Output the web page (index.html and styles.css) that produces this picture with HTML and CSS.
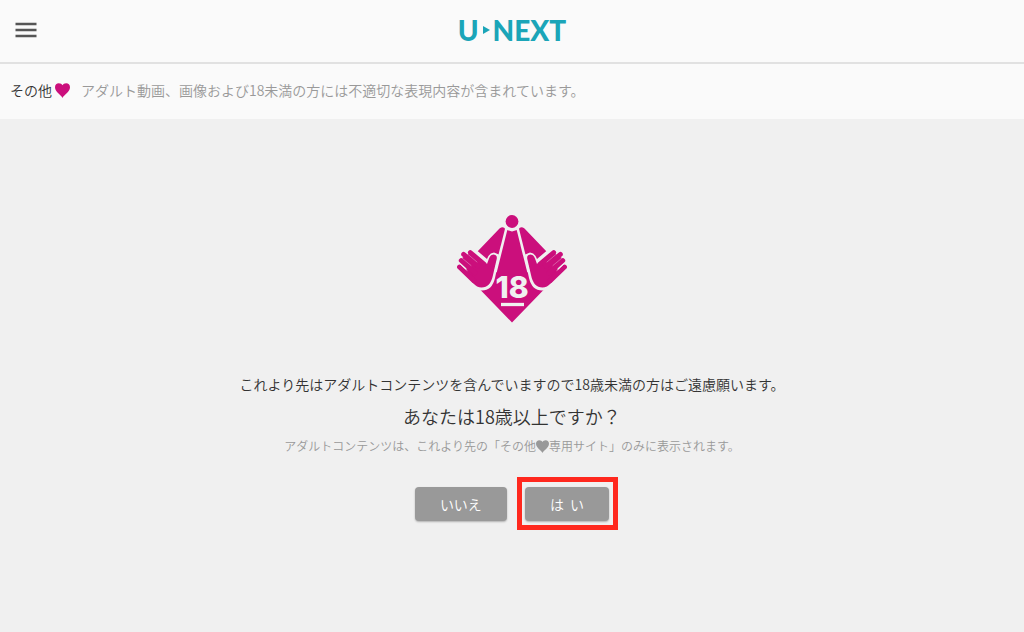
FILE: index.html
```html
<!DOCTYPE html>
<html lang="ja">
<head>
<meta charset="utf-8">
<meta name="viewport" content="width=device-width, initial-scale=1">
<title>U-NEXT</title>
<link rel="stylesheet" href="styles.css">
</head>
<body>
<header class="header">
  <button class="menu" type="button" aria-label="メニュー">
    <svg class="menu-icon" viewBox="0 0 22 16" aria-hidden="true"><path d="M0.500 2h21M0.500 8h21M0.500 14h21" stroke="#555" stroke-width="2.400"/></svg>
  </button>
  <a class="logo" href="#" aria-label="U-NEXT">
    <span class="logo-word">U</span>
    <svg class="logo-arrow" viewBox="0 0 7 8" aria-hidden="true"><path d="M0 0l7 4-7 4z" fill="#1ba5b8"/></svg>
    <span class="logo-word">NEXT</span>
  </a>
</header>
<div class="notice">
  <span class="category">その他<svg class="heart" viewBox="0 0 15 15" aria-hidden="true"><path d="M7.500 15C6.300 11.800 0 9 0 4.200 0 1.800 1.700.3 3.800.3 5.500.3 6.900 1.200 7.500 2.200 8.100 1.200 9.500.3 11.200.3 13.300.3 15 1.800 15 4.200 15 9 8.700 11.800 7.500 15z"/></svg></span>
  <span>アダルト動画、画像および18未満の方には不適切な表現内容が含まれています。</span>
</div>
<main class="gate">
  <svg class="emblem" viewBox="7 7 110 108" role="img" aria-label="18">
    <defs>
      <g id="side">
        <path fill="#cb0f7c" d="M62 114.500L30.500 82 27 44 49.500 20.500Q53.500 17.500 55.500 21.500L62 23.500z"/>
        <path fill="#f0f0f0" d="M24 40L37 51Q39 45 44 44.500L50 47 45 70Q42 83 31 82.500L20 80 10 66z"/>
        <path fill="#cb0f7c" d="M12 50L20 45 37 56 39 50.500Q40.500 46.500 43.500 46.500 47.500 46.700 46.700 51L43 67Q40.500 79.500 31.500 79.500 27 79.500 23 75L14 64 17 60z"/>
        <path fill="none" stroke="#cb0f7c" stroke-width="4.800" stroke-linecap="round" d="M9.500 59L24 73M11.200 52.500L25 65M13.600 46.300L28 58M20.300 44.500L34 56"/>
        <path fill="none" stroke="#f0f0f0" stroke-width=".8" stroke-linecap="round" d="M10.500 56.500L17 62.300"/>
        <path fill="none" stroke="#f0f0f0" stroke-width=".35" stroke-linecap="round" d="M12 50L21 57.500M17.500 46L27 54"/>
        <path fill="none" stroke="#f0f0f0" stroke-width="2.600" d="M56.500 20L45.500 64"/>
      </g>
    </defs>
    <use href="#side"/>
    <use href="#side" transform="translate(124 0) scale(-1 1)"/>
    <circle cx="62" cy="13.500" r="8.200" fill="#f0f0f0"/>
    <circle cx="62" cy="13.500" r="6.400" fill="#cb0f7c"/>
    <text class="emblem-text" x="62" y="90" text-anchor="middle">18</text>
    <path d="M51 96.500h23" stroke="#f0f0f0" stroke-width="3.300"/>
  </svg>
  <p class="warning">これより先はアダルトコンテンツを含んでいますので18歳未満の方はご遠慮願います。</p>
  <h1 class="question">あなたは18歳以上ですか？</h1>
  <p class="detail">アダルトコンテンツは、これより先の「その他<svg class="heart small" viewBox="0 0 15 15" aria-hidden="true"><path d="M7.500 15C6.300 11.800 0 9 0 4.200 0 1.800 1.700.3 3.800.3 5.500.3 6.900 1.200 7.500 2.200 8.100 1.200 9.500.3 11.200.3 13.300.3 15 1.800 15 4.200 15 9 8.700 11.800 7.500 15z"/></svg>専用サイト」のみに表示されます。</p>
  <div class="actions">
    <button class="answer" type="button">いいえ</button>
    <button class="answer highlight" type="button">は&nbsp;&nbsp;い</button>
  </div>
</main>
</body>
</html>
```
FILE: styles.css
```css
* { box-sizing: border-box; }
body {
  margin: 0;
  min-height: 100vh;
  background: #f0f0f0;
  color: #333;
  font-family: "Noto Sans CJK JP", sans-serif;
  font-size: 14px;
  font-weight: 350;
  line-height: 20px;
}
button { font: inherit; border: 0; cursor: pointer; }
.header {
  display: grid;
  grid-template-columns: 1fr auto 1fr;
  align-items: center;
  height: 64px;
  padding: 0 15px 2px;
  background: #fafafa;
  border-bottom: 2px solid #e1e1e1;
}
.menu {
  display: flex;
  justify-self: start;
  padding: 0;
  background: none;
}
.menu-icon { width: 22px; height: 16px; }
.logo {
  display: flex;
  align-items: center;
  color: #1ba5b8;
  font-family: Lato, sans-serif;
  font-size: 28px;
  line-height: 28px;
  text-decoration: none;
}
.logo-word { font-weight: 900; }
.logo-arrow { width: 7px; height: 8px; margin: 0 3px 0 4px; }
.notice {
  display: flex;
  gap: 11px;
  padding: 16px 10px 19px;
  background: #fafafa;
  color: #999;
}
.category { color: #333; white-space: nowrap; }
.heart {
  width: 15px;
  height: 15px;
  margin-left: 3px;
  vertical-align: -2px;
  fill: #cb0f7c;
}
.gate {
  display: flex;
  flex-direction: column;
  align-items: center;
  padding: 96px 16px 40px;
  text-align: center;
}
.emblem { width: 110px; height: 108px; }
.emblem-text {
  fill: #f0f0f0;
  font-family: Inter, sans-serif;
  font-size: 30px;
  font-weight: 800;
}
.warning { margin: 51px 0 0; }
.question { margin: 8px 0 0; font-size: 18px; font-weight: 350; line-height: 28px; }
.detail { margin: 6px 0 0; color: #999; font-size: 12px; }
.heart.small { width: 13px; height: 13px; margin: 0; fill: #999; }
.actions { display: flex; gap: 18px; margin-top: 31px; }
.answer {
  height: 34px;
  padding: 0 25px;
  border-radius: 4px;
  background: #999;
  color: #fff;
  box-shadow: 0 1px 2px #0004;
}
.highlight { position: relative; }
.highlight::after {
  content: "";
  position: absolute;
  inset: -10px -9px -9px -8px;
  border: 5px solid #ff281e;
}
```
